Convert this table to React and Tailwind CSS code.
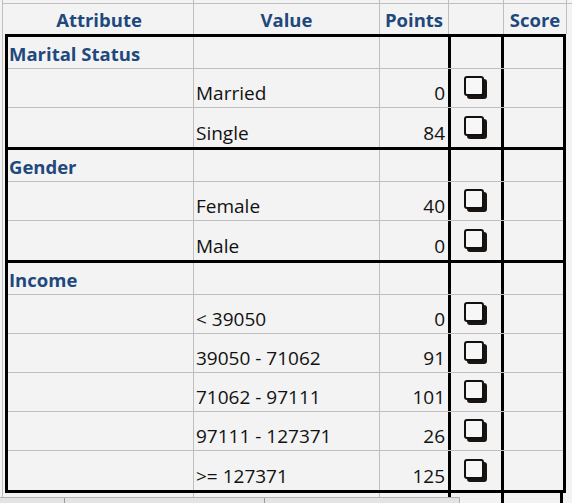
import React from 'react'

const groups = [
  { title: 'Marital Status', items: [['Married', 0], ['Single', 84]] },
  { title: 'Gender', items: [['Female', 40], ['Male', 0]] },
  {
    title: 'Income',
    items: [
      ['< 39050', 0],
      ['39050 - 71062', 91],
      ['71062 - 97111', 101],
      ['97111 - 127371', 26],
      ['>= 127371', 125],
    ],
  },
]

const font = { fontFamily: '"Open Sans", Lato, sans-serif' }

const CheckBox = () => (
  <div className="w-[20px] h-[20px] border-2 border-[#111] rounded-[3px] bg-[#f7f7f7] shadow-[3px_3px_0_#1a1410]" />
)

const Row = ({ attr, value, points, check, last, tall }) => (
  <div className={`flex ${tall ? 'h-[39px]' : 'h-[32px]'} ${last ? '' : 'border-b border-[#bfbfbf]'}`}>
    <div className="w-[186px] border-r border-[#bfbfbf] flex items-end pl-[1px] pb-[3px] leading-[22px] text-[18.5px] font-bold text-[#1f497d]">
      {attr}
    </div>
    <div className="w-[186px] border-r border-[#bfbfbf] flex items-end pl-[2px] pb-[3px] leading-[22px] text-[#111]">
      {value}
    </div>
    <div className="w-[68px] flex items-end justify-end pr-[3px] pb-[3px] leading-[22px] text-[#111]">
      {points}
    </div>
    <div className="w-[56px] border-x-[3px] border-black flex items-end pl-[13px] pb-[11px]">
      {check && <CheckBox />}
    </div>
    <div className="flex-1" />
  </div>
)

export default function App() {
  return (
    <div className="relative w-[572px] h-[503px] overflow-hidden bg-[#f3f3f3] text-[19px] flex" style={font}>
      {/* left strip with the column gridline */}
      <div className="w-[5px] shrink-0">
        <div className="ml-[2px] h-full border-l border-[#bfbfbf]">
          <div className="h-[4px] border-b border-[#bfbfbf]" />
        </div>
      </div>

      <div className="flex-1 flex flex-col">
        {/* partial row above the header */}
        <div className="flex h-[4px] border-b border-[#bfbfbf]">
          <div className="w-[189px] border-r border-[#bfbfbf]" />
          <div className="w-[186px] border-r border-[#bfbfbf]" />
          <div className="w-[69px] border-r border-[#bfbfbf]" />
          <div className="w-[55px] border-r border-[#bfbfbf]" />
          <div className="w-[63px] border-r border-[#bfbfbf]" />
        </div>

        {/* header */}
        <div className="flex h-[30px] font-bold text-[18.5px] text-[#1f497d] leading-[22px]">
          <div className="w-[189px] border-r border-[#bfbfbf] flex items-end justify-center pb-[3px]">Attribute</div>
          <div className="w-[186px] border-r border-[#bfbfbf] flex items-end justify-center pb-[3px]">Value</div>
          <div className="w-[69px] border-r border-[#bfbfbf] flex items-end justify-center pb-[3px]">Points</div>
          <div className="w-[55px] border-r border-[#bfbfbf]" />
          <div className="w-[63px] border-r border-[#bfbfbf] flex items-end justify-center pb-[3px]">Score</div>
        </div>

        {/* body groups */}
        <div className="w-[561px]">
          {groups.map((g, gi) => (
            <div
              key={g.title}
              className={`border-t-[3px] border-x-[3px] border-black ${gi === groups.length - 1 ? 'border-b-[3px]' : ''}`}
            >
              <Row attr={g.title} />
              {g.items.map(([v, p], i) => (
                <Row key={v} value={v} points={p} check tall last={i === g.items.length - 1} />
              ))}
            </div>
          ))}
        </div>

        {/* next row, cut off */}
        <div className="flex flex-1 w-[561px]">
          <div className="w-[189px] border-r border-[#bfbfbf]" />
          <div className="w-[186px] border-r border-[#bfbfbf]" />
          <div className="w-[68px]" />
          <div className="w-[56px] border-x-[3px] border-black" />
          <div className="w-[59px] border-r-[3px] border-black" />
        </div>
      </div>

      {/* horizontal scrollbar over the bottom */}
      <div className="absolute left-0 bottom-0 w-[460px] h-[6px] bg-[#e4e4e4] border-t border-r border-[#b4b4b4] flex">
        <div className="w-[65px] border-r border-[#9a9a9a]" />
        <div className="w-[200px] border-r border-[#9a9a9a]" />
      </div>
    </div>
  )
}
